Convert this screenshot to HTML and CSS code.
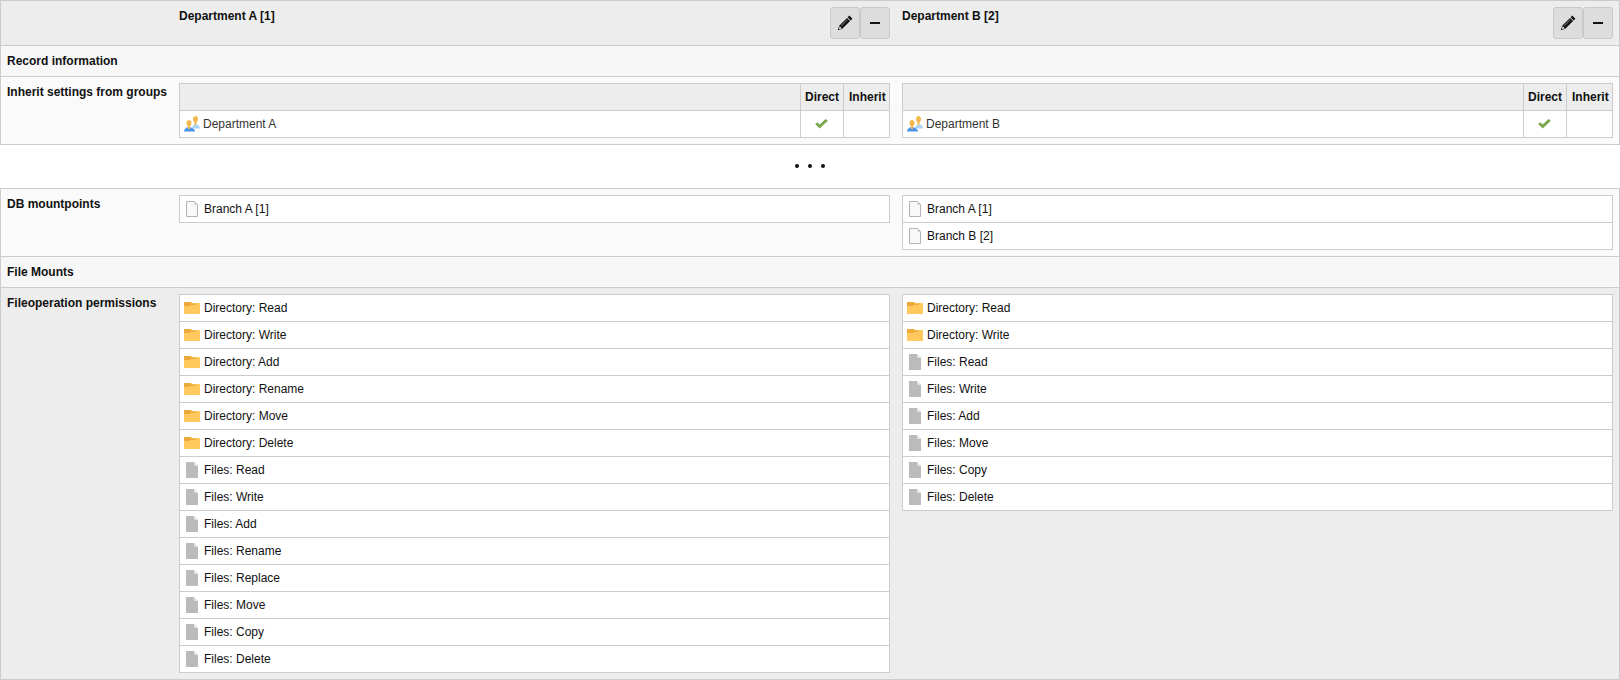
FILE: index.html
```html
<!DOCTYPE html>
<html lang="en">
<head>
<meta charset="utf-8">
<title>Compare records</title>
<link rel="stylesheet" href="styles.css">
</head>
<body>
<svg class="sprites" width="0" height="0" aria-hidden="true">
  <symbol id="i-page" viewBox="0 0 16 16"><path d="M2.500.5h8l3 3v12h-11z" fill="#f8f8f8" stroke="#b4b4b4"/><path d="M10.500 1v3h3z" fill="#cfcfcf"/></symbol>
  <symbol id="i-file" viewBox="0 0 16 16"><path d="M2 0h8.500v3.500H14V16H2z" fill="#bbb"/><path d="M10.500 0L14 3.500h-3.500z" fill="#e6e6e6"/></symbol>
  <symbol id="i-folder" viewBox="0 0 16 16"><path d="M0 2h7l1 1h8v11H0z" fill="#ffc95e"/><path d="M0 2h6.500l1.500 1.500h3.500V5H7L5.500 6H0z" fill="#eda93a"/></symbol>
  <symbol id="i-group" viewBox="0 0 16 16"><path d="M8 12.500c0-2 1.500-3.500 3-4h2c1.500.5 3 2 3 4z" fill="#a8d2f6"/><path d="M9 3c0-4 5-4 5 0 0 2-1 3-1.500 3.500V9h-2V6.500C10 6 9 5 9 3z" fill="#f3b84e"/><path d="M0 15.500c0-2.500 2-3.500 3.500-4.200h3c1.500.7 4.500 1.700 4.500 4.200z" fill="#4a93e8"/><path d="M2.500 7c0-4 5-4 5 0 0 2-1 3-1.500 3.500V13H4v-2.500C3.500 10 2.500 9 2.500 7z" fill="#f3b84e"/></symbol>
  <symbol id="i-pencil" viewBox="0 0 16 16"><path d="M12.300.6l3.100 3.100-1.700 1.700-3.100-3.100z" fill="#111"/><path d="M10 2.900l3.100 3.100-7.800 7.800L.8 15.300l1.400-4.600z" fill="#111"/><path d="M2.600 11.100l2.300 2.300-3 .8z" fill="#ddd"/><path d="M4.100 10.300l5.800-5.800.6.600-5.800 5.800z" fill="#777"/></symbol>
  <symbol id="i-check" viewBox="0 0 14 11"><path d="M0 5.500l2.500-2 2.500 2.500L11.500 0 14 2 5 10.500z" fill="#7aa84f"/></symbol>
</svg>

<main class="compare">
  <section class="row row-head">
    <div class="cell label"></div>
    <div class="cell title-cell">
      <strong>Department A [1]</strong>
      <div class="actions">
        <button class="btn" type="button" aria-label="Edit"><svg class="ico"><use href="#i-pencil"/></svg></button>
        <button class="btn" type="button" aria-label="Remove"><span class="minus"></span></button>
      </div>
    </div>
    <div class="cell title-cell">
      <strong>Department B [2]</strong>
      <div class="actions">
        <button class="btn" type="button" aria-label="Edit"><svg class="ico"><use href="#i-pencil"/></svg></button>
        <button class="btn" type="button" aria-label="Remove"><span class="minus"></span></button>
      </div>
    </div>
  </section>

  <section class="row-section">Record information</section>

  <section class="row row-light">
    <div class="cell label">Inherit settings from groups</div>
    <div class="cell">
      <div class="groups">
        <div class="gh"></div><div class="gh gh-text">Direct</div><div class="gh gh-text gh-last">Inherit</div>
        <div class="gd gd-name"><svg class="ico"><use href="#i-group"/></svg><span class="muted">Department A</span></div>
        <div class="gd gd-mark"><svg class="check"><use href="#i-check"/></svg></div>
        <div class="gd"></div>
      </div>
    </div>
    <div class="cell">
      <div class="groups">
        <div class="gh"></div><div class="gh gh-text">Direct</div><div class="gh gh-text gh-last">Inherit</div>
        <div class="gd gd-name"><svg class="ico"><use href="#i-group"/></svg><span class="muted">Department B</span></div>
        <div class="gd gd-mark"><svg class="check"><use href="#i-check"/></svg></div>
        <div class="gd"></div>
      </div>
    </div>
  </section>
</main>

<div class="gap" aria-label="Skipped rows"><i></i><i></i><i></i></div>

<main class="compare">
  <section class="row row-light">
    <div class="cell label">DB mountpoints</div>
    <div class="cell">
      <ul class="list">
        <li><svg class="ico"><use href="#i-page"/></svg>Branch A [1]</li>
      </ul>
    </div>
    <div class="cell">
      <ul class="list">
        <li><svg class="ico"><use href="#i-page"/></svg>Branch A [1]</li>
        <li><svg class="ico"><use href="#i-page"/></svg>Branch B [2]</li>
      </ul>
    </div>
  </section>

  <section class="row-section">File Mounts</section>

  <section class="row row-dark">
    <div class="cell label">Fileoperation permissions</div>
    <div class="cell">
      <ul class="list">
        <li><svg class="ico"><use href="#i-folder"/></svg>Directory: Read</li>
        <li><svg class="ico"><use href="#i-folder"/></svg>Directory: Write</li>
        <li><svg class="ico"><use href="#i-folder"/></svg>Directory: Add</li>
        <li><svg class="ico"><use href="#i-folder"/></svg>Directory: Rename</li>
        <li><svg class="ico"><use href="#i-folder"/></svg>Directory: Move</li>
        <li><svg class="ico"><use href="#i-folder"/></svg>Directory: Delete</li>
        <li><svg class="ico"><use href="#i-file"/></svg>Files: Read</li>
        <li><svg class="ico"><use href="#i-file"/></svg>Files: Write</li>
        <li><svg class="ico"><use href="#i-file"/></svg>Files: Add</li>
        <li><svg class="ico"><use href="#i-file"/></svg>Files: Rename</li>
        <li><svg class="ico"><use href="#i-file"/></svg>Files: Replace</li>
        <li><svg class="ico"><use href="#i-file"/></svg>Files: Move</li>
        <li><svg class="ico"><use href="#i-file"/></svg>Files: Copy</li>
        <li><svg class="ico"><use href="#i-file"/></svg>Files: Delete</li>
      </ul>
    </div>
    <div class="cell">
      <ul class="list">
        <li><svg class="ico"><use href="#i-folder"/></svg>Directory: Read</li>
        <li><svg class="ico"><use href="#i-folder"/></svg>Directory: Write</li>
        <li><svg class="ico"><use href="#i-file"/></svg>Files: Read</li>
        <li><svg class="ico"><use href="#i-file"/></svg>Files: Write</li>
        <li><svg class="ico"><use href="#i-file"/></svg>Files: Add</li>
        <li><svg class="ico"><use href="#i-file"/></svg>Files: Move</li>
        <li><svg class="ico"><use href="#i-file"/></svg>Files: Copy</li>
        <li><svg class="ico"><use href="#i-file"/></svg>Files: Delete</li>
      </ul>
    </div>
  </section>
</main>
</body>
</html>
```

FILE: styles.css
```css
* { box-sizing: border-box; }
html, body { margin: 0; padding: 0; background: #fff; }
body {
  font-family: "Liberation Sans", Arial, sans-serif;
  font-size: 12px;
  line-height: 15px;
  color: #111;
  overflow: hidden;
}
.sprites { position: absolute; }

.compare { display: block; border: 1px solid #ccc; border-bottom: 0; }

.row {
  display: grid;
  grid-template-columns: 172px 723px 723px;
  border-bottom: 1px solid #ccc;
}
.row-head { background: #ededed; height: 45px; }
.row-light { background: #fafafa; }
.row-dark { background: #ededed; }
.row-section {
  background: #f7f7f7;
  height: 31px;
  padding: 8px 6px 0;
  font-weight: 700;
  border-bottom: 1px solid #ccc;
}

.cell { padding: 6px; min-width: 0; }
.label { font-weight: 700; padding-top: 8px; }

.title-cell { display: flex; justify-content: space-between; align-items: flex-start; }
.title-cell strong { display: block; margin-top: 2px; }
.actions { display: flex; }
.btn {
  width: 30px;
  height: 32px;
  padding: 0;
  margin: 0;
  background: #ddd;
  border: 1px solid #c9c9c9;
  border-radius: 3px;
  display: flex;
  align-items: center;
  justify-content: center;
}
.minus { display: block; width: 10px; height: 2px; background: #111; }

.ico { width: 16px; height: 16px; flex: none; display: block; }

.groups {
  display: grid;
  grid-template-columns: 1fr 43px 46px;
  grid-template-rows: 27px 26px;
  border: 1px solid #ccc;
  background: #fff;
}
.gh { background: #ededed; border-bottom: 1px solid #ccc; border-left: 1px solid #ccc; font-weight: 700; }
.gd { border-left: 1px solid #ccc; }
.gh:first-child, .gd-name { border-left: 0; }
.gh-text { padding: 6px 4px; white-space: nowrap; }
.gh-last { padding-left: 5px; }
.gd-name { display: flex; align-items: center; gap: 3px; padding-left: 4px; }
.gd-mark { display: flex; align-items: center; justify-content: center; padding-right: 2px; }
.check { width: 13px; height: 10px; display: block; }
.muted { color: #333; }

.list { list-style: none; margin: 0; padding: 0; background: #fff; border: 1px solid #ccc; border-bottom: 0; }
.list li {
  height: 27px;
  display: flex;
  align-items: center;
  gap: 4px;
  padding-left: 4px;
  border-bottom: 1px solid #ccc;
}

.gap { height: 43px; display: flex; align-items: center; justify-content: center; gap: 9px; padding: 0 1px 1px 0; }
.gap i { display: block; width: 4px; height: 4px; border-radius: 50%; background: #111; }
```
